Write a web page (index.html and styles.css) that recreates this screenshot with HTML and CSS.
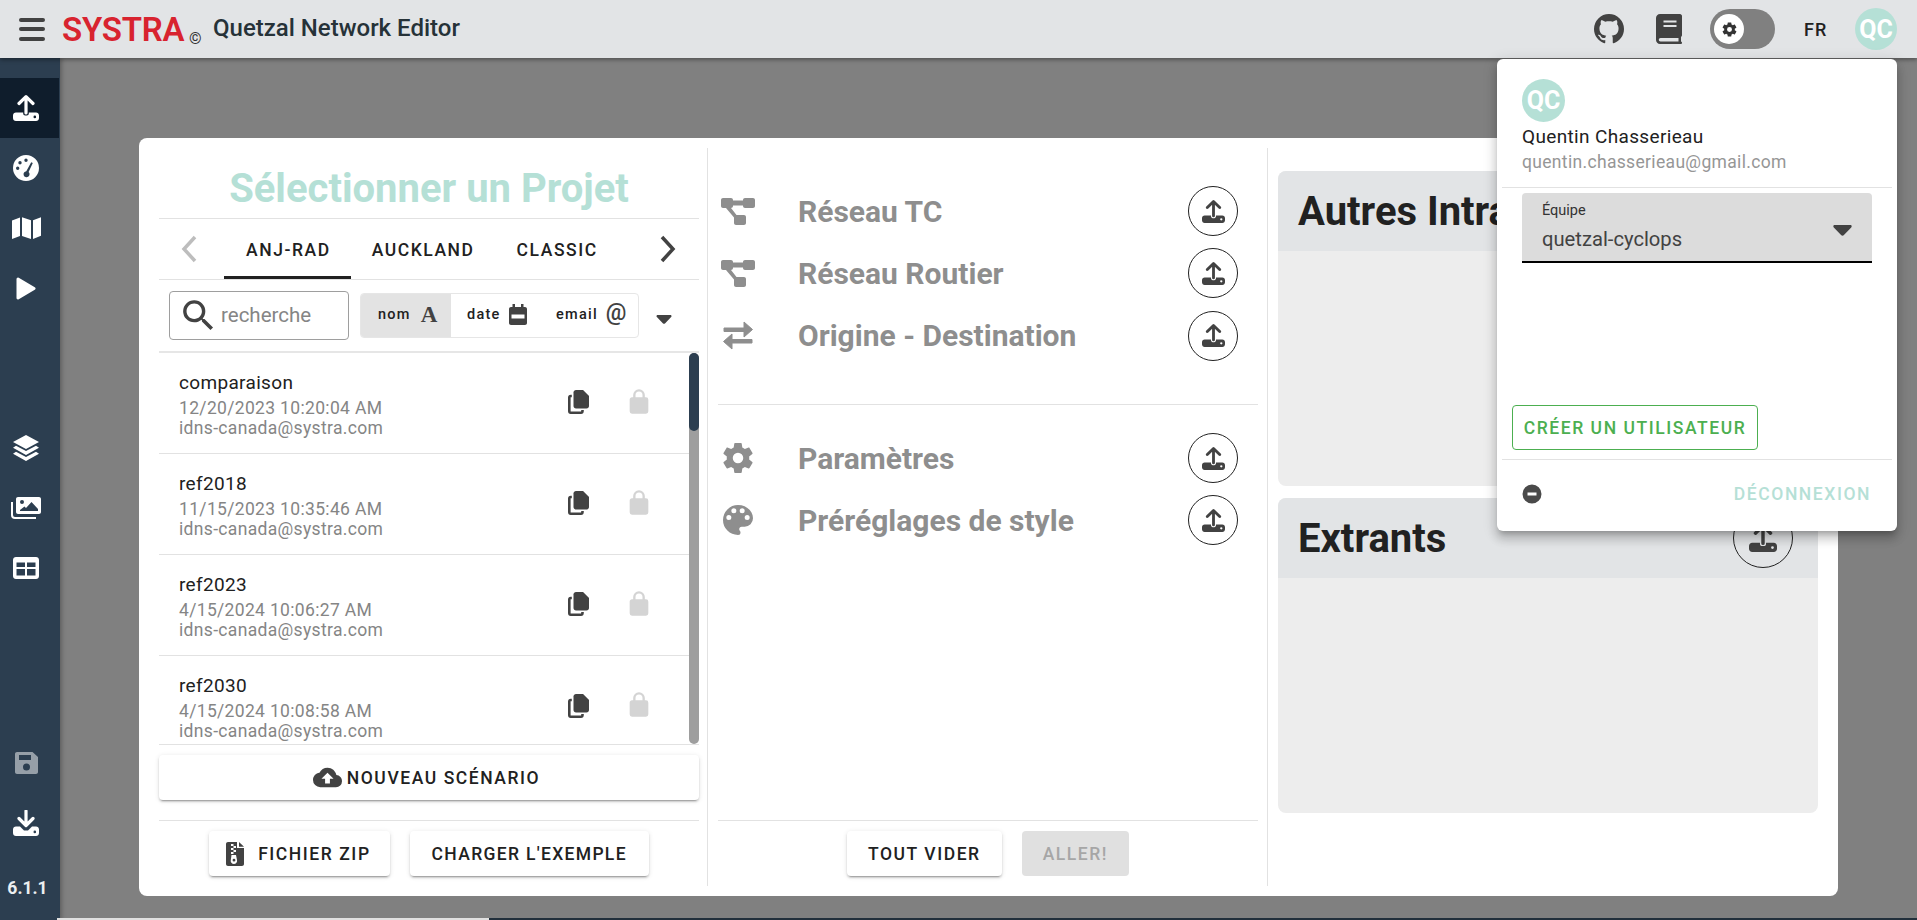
FILE: index.html
```html
<!DOCTYPE html>
<html lang="fr">
<head>
<meta charset="utf-8">
<title>Quetzal Network Editor</title>
<link rel="stylesheet" href="styles.css">
</head>
<body>
<svg class="sprite" xmlns="http://www.w3.org/2000/svg">
  <symbol id="i-upload" viewBox="0 0 26 26"><path d="M13 18V2.500M6 8.500L13 1.700L20 8.500" fill="none" stroke="currentColor" stroke-width="3.200" stroke-linecap="round" stroke-linejoin="round"/><path fill-rule="evenodd" d="M3 17.500H10.200V18.500C10.200 19.800 11 20.500 12.200 20.500H13.800C15 20.500 15.800 19.800 15.800 18.500V17.500H23C24.700 17.500 26 18.800 26 20.500V23C26 24.700 24.700 26 23 26H3C1.300 26 0 24.700 0 23V20.500C0 18.800 1.300 17.500 3 17.500ZM21.800 20.600A1.300 1.300 0 1 0 21.800 23.200A1.300 1.300 0 1 0 21.800 20.600Z" fill="currentColor"/></symbol>
  <symbol id="i-download" viewBox="0 0 26 26"><path d="M13 1V15M6 8.500L13 15.500L20 8.500" fill="none" stroke="currentColor" stroke-width="3.200" stroke-linecap="round" stroke-linejoin="round"/><path fill-rule="evenodd" d="M3 16.500H7L11 20.500H15L19 16.500H23C24.700 16.500 26 17.800 26 19.500V23C26 24.700 24.700 26 23 26H3C1.300 26 0 24.700 0 23V19.500C0 17.800 1.300 16.500 3 16.500ZM21.800 20.600A1.300 1.300 0 1 0 21.800 23.200A1.300 1.300 0 1 0 21.800 20.600Z" fill="currentColor"/></symbol>
  <symbol id="i-tach" viewBox="0 0 26 26"><path fill-rule="evenodd" fill="currentColor" d="M13 0A13 13 0 1 0 13 26A13 13 0 1 0 13 0ZM13 3.500A1.700 1.700 0 1 1 13 6.900A1.700 1.700 0 1 1 13 3.500ZM7 6A1.700 1.700 0 1 1 7 9.400A1.700 1.700 0 1 1 7 6ZM4.700 11.500A1.700 1.700 0 1 1 4.700 14.900A1.700 1.700 0 1 1 4.700 11.500ZM18.200 7.200L19.800 8L15.600 17A3 3 0 1 1 13.300 16.200Z"/></symbol>
  <symbol id="i-map" viewBox="0 0 29 22"><path fill="currentColor" d="M0 3.500L8 .5V19L0 22ZM10 .3L19 3.300V22L10 19ZM21 3.300L29 .2V18.800L21 22Z"/></symbol>
  <symbol id="i-play" viewBox="0 0 20 23"><path fill="currentColor" stroke="currentColor" stroke-width="3" stroke-linejoin="round" d="M2 2L18 11.500L2 21Z"/></symbol>
  <symbol id="i-layers" viewBox="0 0 26 26"><path fill="currentColor" d="M13 0L26 7L13 14L0 7ZM3 10.700L13 16L23 10.700L26 12.700L13 20L0 12.700ZM3 16.700L13 22L23 16.700L26 18.700L13 26L0 18.700Z"/></symbol>
  <symbol id="i-images" viewBox="0 0 30 22"><path fill="none" stroke="currentColor" stroke-width="2" d="M1 5V18C1 19.700 2.300 21 4 21H25"/><path fill="currentColor" fill-rule="evenodd" d="M7 0H28C29.100 0 30 .9 30 2V15C30 16.100 29.100 17 28 17H7C5.900 17 5 16.100 5 15V2C5 .9 5.900 0 7 0ZM11 3A2 2 0 1 0 11 7A2 2 0 1 0 11 3ZM9 14H27V12L20.500 5L15 11L13.500 9.500L9 13Z"/></symbol>
  <symbol id="i-table" viewBox="0 0 26 22"><path fill="currentColor" fill-rule="evenodd" d="M3 0H23C24.700 0 26 1.300 26 3V19C26 20.700 24.700 22 23 22H3C1.300 22 0 20.700 0 19V3C0 1.300 1.300 0 3 0ZM3.500 5.500V10H12V5.500ZM14 5.500V10H22.500V5.500ZM3.500 12V18.500H12V12ZM14 12V18.500H22.500V12Z"/></symbol>
  <symbol id="i-save" viewBox="0 0 23 22"><path fill="currentColor" fill-rule="evenodd" d="M2 0H17.500L23 5V20C23 21.100 22.100 22 21 22H2C.9 22 0 21.100 0 20V2C0 .9 .9 0 2 0ZM4 3V8H16V3ZM11.500 11.500A3.500 3.500 0 1 0 11.500 18.500A3.500 3.500 0 1 0 11.500 11.500Z"/></symbol>
  <symbol id="i-diagram" viewBox="0 0 34 27"><path fill="currentColor" d="M2 0H10C11.100 0 12 .9 12 2V2.500H22V2C22 .9 22.900 0 24 0H32C33.100 0 34 .9 34 2V8C34 9.100 33.100 10 32 10H24C22.900 10 22 9.100 22 8V7.500H12V8C12 9.100 11.100 10 10 10L15.500 17H23C24.100 17 25 17.900 25 19V25C25 26.100 24.100 27 23 27H15C13.900 27 13 26.100 13 25V19.500L5 10H2C.9 10 0 9.100 0 8V2C0 .9 .9 0 2 0Z"/></symbol>
  <symbol id="i-swap" viewBox="0 0 30 29"><path fill="currentColor" stroke="currentColor" stroke-width="1" stroke-linejoin="round" d="M1 7H21V1L29.500 8.500L21 16V10.500H1ZM29 18.500H9V13L.5 20.500L9 28V22H29Z"/></symbol>
  <symbol id="i-cog" viewBox="0 0 24 24"><path fill="currentColor" d="M12,15.500A3.500,3.500 0 0,1 8.500,12A3.500,3.500 0 0,1 12,8.500A3.500,3.500 0 0,1 15.500,12A3.500,3.500 0 0,1 12,15.500M19.430,12.970C19.470,12.650 19.500,12.330 19.500,12C19.500,11.670 19.470,11.340 19.430,11L21.540,9.370C21.730,9.220 21.780,8.950 21.660,8.730L19.660,5.270C19.540,5.050 19.270,4.960 19.050,5.050L16.560,6.050C16.040,5.660 15.500,5.320 14.870,5.070L14.500,2.420C14.460,2.180 14.250,2 14,2H10C9.750,2 9.540,2.180 9.500,2.420L9.130,5.070C8.500,5.320 7.960,5.660 7.440,6.050L4.950,5.050C4.730,4.960 4.460,5.050 4.340,5.270L2.340,8.730C2.210,8.950 2.270,9.220 2.460,9.370L4.570,11C4.530,11.340 4.500,11.670 4.500,12C4.500,12.330 4.530,12.650 4.570,12.970L2.460,14.630C2.270,14.780 2.210,15.050 2.340,15.270L4.340,18.730C4.460,18.950 4.730,19.030 4.950,18.950L7.440,17.940C7.960,18.340 8.500,18.680 9.130,18.930L9.500,21.580C9.540,21.820 9.750,22 10,22H14C14.250,22 14.460,21.820 14.500,21.580L14.870,18.930C15.500,18.670 16.040,18.340 16.560,17.940L19.050,18.950C19.270,19.030 19.540,18.950 19.660,18.730L21.660,15.270C21.780,15.050 21.730,14.780 21.540,14.630L19.430,12.970Z"/></symbol>
  <symbol id="i-palette" viewBox="0 0 24 24"><path fill="currentColor" d="M17.500,12A1.500,1.500 0 0,1 16,10.500A1.500,1.500 0 0,1 17.500,9A1.500,1.500 0 0,1 19,10.500A1.500,1.500 0 0,1 17.500,12M14.500,8A1.500,1.500 0 0,1 13,6.500A1.500,1.500 0 0,1 14.500,5A1.500,1.500 0 0,1 16,6.500A1.500,1.500 0 0,1 14.500,8M9.500,8A1.500,1.500 0 0,1 8,6.500A1.500,1.500 0 0,1 9.500,5A1.500,1.500 0 0,1 11,6.500A1.500,1.500 0 0,1 9.500,8M6.500,12A1.500,1.500 0 0,1 5,10.500A1.500,1.500 0 0,1 6.500,9A1.500,1.500 0 0,1 8,10.500A1.500,1.500 0 0,1 6.500,12M12,3A9,9 0 0,0 3,12A9,9 0 0,0 12,21A1.500,1.500 0 0,0 13.500,19.500C13.500,19.110 13.350,18.760 13.110,18.500C12.880,18.230 12.730,17.880 12.730,17.500A1.500,1.500 0 0,1 14.230,16H16A5,5 0 0,0 21,11C21,6.580 16.970,3 12,3Z"/></symbol>
  <symbol id="i-copy" viewBox="0 0 21 24"><path fill="currentColor" d="M8 0H15L21 6V16C21 17.400 19.900 18.500 18.500 18.500H8C6.600 18.500 5.500 17.400 5.500 16V2.500C5.500 1.100 6.600 0 8 0Z"/><path fill="currentColor" d="M15 .5L20.500 6H15Z"/><path fill="none" stroke="currentColor" stroke-width="2.600" d="M3.800 6H2.700C1.800 6 1.300 6.600 1.300 7.500V21C1.300 22 1.800 22.700 2.700 22.700H13C14 22.700 14.500 22 14.500 21V20"/></symbol>
  <symbol id="i-lock" viewBox="0 0 24 24"><path fill="currentColor" d="M18,8A2,2 0 0,1 20,10V20A2,2 0 0,1 18,22H6A2,2 0 0,1 4,20V10C4,8.890 4.900,8 6,8H7V6A5,5 0 0,1 12,1A5,5 0 0,1 17,6V8H18M12,3A3,3 0 0,0 9,6V8H15V6A3,3 0 0,0 12,3Z"/></symbol>
  <symbol id="i-cloud" viewBox="0 0 24 24"><path fill="currentColor" d="M14,13V17H10V13H7L12,8L17,13M19.350,10.030C18.670,6.590 15.640,4 12,4C9.110,4 6.600,5.640 5.350,8.030C2.340,8.360 0,10.900 0,14A6,6 0 0,0 6,20H19A5,5 0 0,0 24,15C24,12.360 21.950,10.220 19.350,10.030Z"/></symbol>
  <symbol id="i-zip" viewBox="0 0 18 24"><path fill="currentColor" fill-rule="evenodd" d="M2 0H11V6H18V22C18 23.100 17.100 24 16 24H2C.9 24 0 23.100 0 22V2C0 .9 .9 0 2 0ZM5 2V4H7.500V2ZM7.500 4V6H10V4ZM5 6V8H7.500V6ZM7.500 8V10H10V8ZM5 10V12H7.500V10ZM5.500 13L4.800 18A3.200 3.200 0 1 0 11 18L10 13ZM8 16.800A1.400 1.400 0 1 1 8 19.600A1.400 1.400 0 1 1 8 16.800ZM13 0L18 4.700H13Z"/></symbol>
  <symbol id="i-search" viewBox="0 0 24 24"><path fill="currentColor" d="M9.500,3A6.500,6.500 0 0,1 16,9.500C16,11.110 15.410,12.590 14.440,13.730L14.710,14H15.500L20.500,19L19,20.500L14,15.500V14.710L13.730,14.440C12.590,15.410 11.110,16 9.500,16A6.500,6.500 0 0,1 3,9.500A6.500,6.500 0 0,1 9.500,3M9.500,5C7,5 5,7 5,9.500C5,12 7,14 9.500,14C12,14 14,12 14,9.500C14,7 12,5 9.500,5Z"/></symbol>
  <symbol id="i-cal" viewBox="0 0 18 21"><path fill="currentColor" fill-rule="evenodd" d="M3.500 0H6V3H12V0H14.500V3H16C17.100 3 18 3.900 18 5V19C18 20.100 17.100 21 16 21H2C.9 21 0 20.100 0 19V5C0 3.900 .9 3 2 3H3.500ZM2.500 10.500V14.500H15.500V10.500Z"/></symbol>
  <symbol id="i-caret" viewBox="0 0 20 12"><path fill="currentColor" d="M0 1.500C0 .5 .7 0 1.500 0H18.500C19.500 0 20 .5 20 1.500C20 2 19.800 2.400 19.500 2.700L11.300 11.300C10.600 12 9.400 12 8.700 11.300L.5 2.700C.2 2.400 0 2 0 1.500Z"/></symbol>
  <symbol id="i-github" viewBox="0 0 24 24"><path fill="currentColor" d="M12,2A10,10 0 0,0 2,12C2,16.420 4.870,20.170 8.840,21.500C9.340,21.580 9.500,21.270 9.500,21C9.500,20.770 9.500,20.140 9.500,19.310C6.730,19.910 6.140,17.970 6.140,17.970C5.680,16.810 5.030,16.500 5.030,16.500C4.120,15.880 5.100,15.900 5.100,15.900C6.100,15.970 6.630,16.930 6.630,16.930C7.500,18.450 8.970,18 9.540,17.760C9.630,17.110 9.890,16.670 10.170,16.420C7.950,16.170 5.620,15.310 5.620,11.500C5.620,10.390 6,9.500 6.650,8.790C6.550,8.540 6.200,7.500 6.750,6.150C6.750,6.150 7.590,5.880 9.500,7.170C10.290,6.950 11.150,6.840 12,6.840C12.850,6.840 13.710,6.950 14.500,7.170C16.410,5.880 17.250,6.150 17.250,6.150C17.800,7.500 17.450,8.540 17.350,8.790C18,9.500 18.380,10.390 18.380,11.500C18.380,15.320 16.040,16.160 13.810,16.410C14.170,16.720 14.500,17.330 14.500,18.260C14.500,19.600 14.500,20.680 14.500,21C14.500,21.270 14.660,21.590 15.170,21.500C19.140,20.160 22,16.420 22,12A10,10 0 0,0 12,2Z"/></symbol>
  <symbol id="i-book" viewBox="0 0 26 30"><path fill="currentColor" fill-rule="evenodd" d="M4 0H24C25 0 26 1 26 2V21C26 22 25.500 22.500 25 23V27.500C25.700 27.700 26 28 26 28.700C26 29.500 25.500 30 24.800 30H4C1.800 30 0 28.200 0 26V4C0 1.800 1.800 0 4 0ZM7.500 6.500V8.500H20.500V6.500ZM7.500 11V13H20.500V11ZM4.500 24A1.500 1.500 0 0 0 4.500 27.500H22.500V24Z"/></symbol>
  <symbol id="i-minus" viewBox="0 0 20 20"><path fill="currentColor" fill-rule="evenodd" d="M10 .5A9.500 9.500 0 1 0 10 19.500A9.500 9.500 0 1 0 10 .5ZM5.500 8.500H14.500V11.500H5.500Z"/></symbol>
</svg>

<div class="app">
  <header class="topbar">
    <div class="burger"><span></span><span></span><span></span></div>
    <span class="logo">SYSTRA</span>
    <span class="copyright">©</span>
    <span class="appname">Quetzal Network Editor</span>
    <div class="topbar-right">
      <svg class="ic-github"><use href="#i-github"/></svg>
      <svg class="ic-book"><use href="#i-book"/></svg>
      <div class="toggle"><span class="knob"><svg class="ic-knob"><use href="#i-cog"/></svg></span></div>
      <span class="lang">FR</span>
      <span class="avatar avatar-top">QC</span>
    </div>
  </header>

  <div class="main">
    <nav class="sidebar">
      <a class="nav active"><svg class="ic-26"><use href="#i-upload"/></svg></a>
      <a class="nav"><svg class="ic-26"><use href="#i-tach"/></svg></a>
      <a class="nav"><svg class="ic-map"><use href="#i-map"/></svg></a>
      <a class="nav"><svg class="ic-play"><use href="#i-play"/></svg></a>
      <div class="nav-gap"></div>
      <a class="nav"><svg class="ic-26"><use href="#i-layers"/></svg></a>
      <a class="nav"><svg class="ic-images"><use href="#i-images"/></svg></a>
      <a class="nav"><svg class="ic-table"><use href="#i-table"/></svg></a>
      <div class="nav-spacer"></div>
      <a class="nav disabled"><svg class="ic-save"><use href="#i-save"/></svg></a>
      <a class="nav"><svg class="ic-26"><use href="#i-download"/></svg></a>
      <div class="version">6.1.1</div>
    </nav>

    <main class="stage">
      <section class="dialog">
        <div class="col col-left">
          <h1 class="title">Sélectionner un Projet</h1>
          <div class="tabs">
            <svg class="chev chev-off" viewBox="0 0 16 28"><path d="M14 2L3 14L14 26"/></svg>
            <div class="tab tab-on">ANJ-RAD</div>
            <div class="tab">AUCKLAND</div>
            <div class="tab">CLASSIC</div>
            <svg class="chev chev-on" viewBox="0 0 16 28"><path d="M2 2L13 14L2 26"/></svg>
          </div>
          <div class="filters">
            <div class="search"><svg class="ic-search"><use href="#i-search"/></svg><span>recherche</span></div>
            <div class="sorter">
              <div class="sort sort-on"><span>nom</span><span class="glyph-a">A</span></div>
              <div class="sort sort-date"><span>date</span><svg class="ic-cal"><use href="#i-cal"/></svg></div>
              <div class="sort sort-mail"><span>email</span><span class="glyph-at">@</span></div>
            </div>
            <svg class="ic-caret"><use href="#i-caret"/></svg>
          </div>
          <div class="list">
            <div class="rows">
              <div class="row">
                <div class="row-text"><div class="row-name">comparaison</div><div class="row-sub">12/20/2023 10:20:04 AM</div><div class="row-sub">idns-canada@systra.com</div></div>
                <svg class="ic-copy"><use href="#i-copy"/></svg><svg class="ic-lock"><use href="#i-lock"/></svg>
              </div>
              <div class="row">
                <div class="row-text"><div class="row-name">ref2018</div><div class="row-sub">11/15/2023 10:35:46 AM</div><div class="row-sub">idns-canada@systra.com</div></div>
                <svg class="ic-copy"><use href="#i-copy"/></svg><svg class="ic-lock"><use href="#i-lock"/></svg>
              </div>
              <div class="row">
                <div class="row-text"><div class="row-name">ref2023</div><div class="row-sub">4/15/2024 10:06:27 AM</div><div class="row-sub">idns-canada@systra.com</div></div>
                <svg class="ic-copy"><use href="#i-copy"/></svg><svg class="ic-lock"><use href="#i-lock"/></svg>
              </div>
              <div class="row">
                <div class="row-text"><div class="row-name">ref2030</div><div class="row-sub">4/15/2024 10:08:58 AM</div><div class="row-sub">idns-canada@systra.com</div></div>
                <svg class="ic-copy"><use href="#i-copy"/></svg><svg class="ic-lock"><use href="#i-lock"/></svg>
              </div>
            </div>
            <div class="scrollbar"><div class="thumb"></div></div>
          </div>
          <button class="btn btn-wide"><svg class="ic-cloud"><use href="#i-cloud"/></svg>NOUVEAU SCÉNARIO</button>
          <div class="foot">
            <button class="btn btn-zip"><svg class="ic-zip"><use href="#i-zip"/></svg>FICHIER ZIP</button>
            <button class="btn btn-tight">CHARGER L'EXEMPLE</button>
          </div>
        </div>

        <div class="col col-mid">
          <div class="group group-a">
            <div class="inp"><span class="inp-ic"><svg class="ic-diagram"><use href="#i-diagram"/></svg></span><span class="inp-label">Réseau TC</span><span class="up"><svg class="ic-up"><use href="#i-upload"/></svg></span></div>
            <div class="inp"><span class="inp-ic"><svg class="ic-diagram"><use href="#i-diagram"/></svg></span><span class="inp-label">Réseau Routier</span><span class="up"><svg class="ic-up"><use href="#i-upload"/></svg></span></div>
            <div class="inp"><span class="inp-ic"><svg class="ic-swap"><use href="#i-swap"/></svg></span><span class="inp-label">Origine - Destination</span><span class="up"><svg class="ic-up"><use href="#i-upload"/></svg></span></div>
          </div>
          <div class="group group-b">
            <div class="inp"><span class="inp-ic"><svg class="ic-cog"><use href="#i-cog"/></svg></span><span class="inp-label">Paramètres</span><span class="up"><svg class="ic-up"><use href="#i-upload"/></svg></span></div>
            <div class="inp"><span class="inp-ic"><svg class="ic-palette"><use href="#i-palette"/></svg></span><span class="inp-label">Préréglages de style</span><span class="up"><svg class="ic-up"><use href="#i-upload"/></svg></span></div>
          </div>
          <div class="foot">
            <button class="btn">TOUT VIDER</button>
            <button class="btn btn-off">ALLER!</button>
          </div>
        </div>

        <div class="col col-right">
          <div class="panel">
            <div class="panel-head"><h2>Autres Intrants</h2><span class="up up-big"><svg class="ic-up-big"><use href="#i-upload"/></svg></span></div>
          </div>
          <div class="panel">
            <div class="panel-head"><h2>Extrants</h2><span class="up up-big"><svg class="ic-up-big"><use href="#i-upload"/></svg></span></div>
          </div>
        </div>
      </section>
    </main>
  </div>

  <div class="edge"><span class="edge-a"></span><span class="edge-b"></span></div>

  <aside class="menu">
    <div class="menu-user">
      <span class="avatar avatar-menu">QC</span>
      <div class="menu-name">Quentin Chasserieau</div>
      <div class="menu-mail">quentin.chasserieau@gmail.com</div>
    </div>
    <div class="menu-body">
      <div class="select">
        <div class="select-text"><div class="select-label">Équipe</div><div class="select-value">quetzal-cyclops</div></div>
        <svg class="ic-caret-sel"><use href="#i-caret"/></svg>
      </div>
      <button class="btn-outline">CRÉER UN UTILISATEUR</button>
    </div>
    <div class="menu-foot">
      <svg class="ic-minus"><use href="#i-minus"/></svg>
      <span class="logout">DÉCONNEXION</span>
    </div>
  </aside>
</div>
</body>
</html>
```

FILE: styles.css
```css
* { box-sizing: border-box; }
html, body { margin: 0; height: 100%; overflow: hidden; }
body { font-family: Roboto, "Noto Sans", sans-serif; color: #212121; background: #808080; }
.sprite { display: none; }
svg { display: block; flex: none; }
h1, h2 { margin: 0; }
button { font-family: inherit; border: 0; cursor: pointer; }

.app { position: relative; width: 1917px; height: 920px; display: flex; flex-direction: column; }

/* top bar */
.topbar { position: relative; z-index: 3; height: 58px; flex: none; background: #e2e4e6; display: flex; align-items: center; box-shadow: 0 2px 4px rgba(0,0,0,.35); padding-left: 19px; }
.burger { width: 26px; height: 23px; display: flex; flex-direction: column; justify-content: space-between; }
.burger span { height: 4px; border-radius: 2px; background: #424242; }
.logo { margin-left: 17px; font-size: 33px; font-weight: 600; letter-spacing: -.2px; color: #d8232f; line-height: 1; width: 120px; }
.copyright { margin: 18px 0 0 7px; font-size: 16px; color: #333; width: 24px; }
.appname { font-size: 24px; font-weight: 500; color: #263238; margin-top: -2px; }
.topbar-right { margin-left: auto; display: flex; align-items: center; padding-right: 20px; }
.ic-github { width: 36px; height: 36px; color: #424242; margin-right: 29px; }
.ic-book { width: 26px; height: 30px; color: #424242; margin-right: 28px; }
.toggle { width: 65px; height: 40px; border-radius: 20px; background: #808080; padding: 5px 0 0 4px; margin-right: 29px; }
.knob { width: 30px; height: 30px; border-radius: 50%; background: #fff; display: flex; align-items: center; justify-content: center; }
.ic-knob { width: 17px; height: 17px; color: #333; }
.lang { font-size: 18px; font-weight: 500; letter-spacing: 1px; width: 37px; color: #212121; margin-right: 14px; }
.avatar { border-radius: 50%; background: #b5e0d6; color: #fff; font-weight: 700; display: flex; align-items: center; justify-content: center; }
.avatar-top { width: 42px; height: 42px; font-size: 25px; }

/* layout */
.main { flex: 1; display: flex; min-height: 0; }
.sidebar { position: relative; z-index: 2; width: 60px; flex: none; background: #2c3e50; box-shadow: 2px 0 4px rgba(0,0,0,.25); display: flex; flex-direction: column; padding-top: 20px; color: #fff; }
.nav { height: 60px; display: flex; align-items: center; justify-content: center; padding-right: 8px; flex: none; }
.nav.active { background: #0f1d2c; width: 59px; padding-right: 7px; }
.nav.disabled { opacity: .5; }
.nav-gap { height: 100px; flex: none; }
.nav-spacer { flex: 1; }
.version { font-size: 17.5px; font-weight: 700; text-align: center; height: 67px; padding: 25px 5px 0 0; color: #eceff1; flex: none; }
.ic-26 { width: 26px; height: 26px; }
.ic-map { width: 29px; height: 22px; }
.ic-play { width: 20px; height: 23px; }
.ic-images { width: 30px; height: 22px; }
.ic-table { width: 26px; height: 22px; }
.ic-save { width: 23px; height: 22px; }

.stage { flex: 1; background: #808080; padding: 80px 0 0 79px; }
.dialog { width: 1699px; height: 758px; background: #fff; border-radius: 8px; padding: 10px 0; display: flex; }
.col { height: 738px; display: flex; flex-direction: column; flex: none; }
.col-left { width: 569px; padding: 0 8px 0 20px; border-right: 1px solid #e2e2e2; }
.col-mid { width: 560px; padding: 0 9px 0 10px; border-right: 1px solid #e2e2e2; }
.col-right { flex: 1; padding: 23px 20px 0 10px; gap: 12px; }

/* left */
.title { height: 71px; flex: none; border-bottom: 1px solid #e2e2e2; font-size: 40px; font-weight: 700; color: #b5e0d6; text-align: center; line-height: 82px; white-space: nowrap; }
.tabs { height: 61px; flex: none; border-bottom: 1px solid #e2e2e2; display: flex; align-items: center; font-size: 17.5px; font-weight: 500; letter-spacing: 1.56px; position: relative; }
.chev { width: 16px; height: 28px; }
.chev path { fill: none; stroke-width: 3.5; }
.chev-off { margin: 0 27px 0 22px; }
.chev-off path { stroke: #bdbdbd; }
.chev-on { margin-left: 41px; }
.chev-on path { stroke: #424242; }
.tab { height: 60px; display: flex; align-items: center; padding: 1px 21px 0; color: #212121; }
.tab-on { border-bottom: 3px solid #212121; padding: 4px 20px 0 22px; }
.filters { height: 71px; flex: none; display: flex; align-items: center; padding-left: 10px; }
.search { width: 180px; height: 49px; border: 1px solid #9e9e9e; border-radius: 4px; display: flex; align-items: center; font-size: 20.5px; color: #858585; padding-left: 8px; }
.search span { margin-top: -2px; }
.ic-search { width: 41px; height: 41px; color: #424242; margin-right: 2px; }
.sorter { margin-left: 11px; width: 279px; height: 45px; border: 1px solid #e6e6e6; border-radius: 4px; display: flex; overflow: hidden; font-size: 14.5px; font-weight: 500; letter-spacing: 1.25px; }
.sort { display: flex; align-items: center; color: #212121; padding-bottom: 2px; }
.sort-on { width: 90px; background: #e3e3e3; padding-left: 17px; }
.sort-date { width: 88px; padding-left: 16px; }
.sort-mail { flex: 1; padding-left: 17px; }
.glyph-a { font-family: "Liberation Serif", serif; font-size: 23px; font-weight: 700; margin-left: 10px; color: #424242; letter-spacing: 0; }
.glyph-at { font-size: 23px; font-weight: 500; margin-left: 8px; color: #424242; letter-spacing: 0; margin-top: -4px; }
.ic-cal { width: 18px; height: 21px; color: #424242; margin-left: 8px; }
.ic-caret { width: 16px; height: 9px; color: #424242; margin-left: 17px; margin-top: 7px; }
.list { height: 394px; flex: none; border-top: 2px solid #e6e6e6; border-bottom: 1px solid #e2e2e2; display: flex; overflow: hidden; position: relative; }
.rows { flex: 1; min-width: 0; }
.row { height: 101px; border-bottom: 1px solid #e2e2e2; display: flex; align-items: center; padding: 0 0 0 20px; }
.row:last-child { border-bottom: 0; }
.row-text { flex: 1; padding-top: 2px; }
.row-name { font-size: 19px; line-height: 24px; letter-spacing: .33px; color: #212121; margin-bottom: 3px; }
.row-sub { font-size: 17.5px; line-height: 20px; color: #858585; letter-spacing: .33px; }
.ic-copy { width: 21px; height: 24px; color: #424242; margin-right: 36px; margin-top: -2px; }
.ic-lock { width: 28px; height: 28px; color: #d4d4d4; margin-right: 36px; margin-top: -3px; }
.scrollbar { width: 10px; background: #9e9e9e; border-radius: 5px; flex: none; }
.thumb { height: 78px; background: #2c3e50; border-radius: 5px; }

.btn { height: 45px; background: #fff; border-radius: 4px; padding: 0 21px; display: inline-flex; align-items: center; justify-content: center; font-size: 17.5px; font-weight: 500; letter-spacing: 1.56px; color: #212121; box-shadow: 0 3px 1px -2px rgba(0,0,0,.2), 0 2px 2px 0 rgba(0,0,0,.14), 0 1px 5px 0 rgba(0,0,0,.12); white-space: nowrap; }
.btn-wide { flex: none; margin-top: 10px; width: 100%; padding-right: 26px; }
.btn-tight { letter-spacing: 1.32px; padding: 0 22px; }
.btn-zip { padding-right: 19px; }
.ic-cloud { width: 29px; height: 29px; color: #424242; margin-right: 5px; }
.ic-zip { width: 18px; height: 24px; color: #424242; margin: 0 14px 0 -4px; }
.btn-off { background: #e0e0e0; color: #a6a6a6; box-shadow: none; }
.foot { margin-top: auto; height: 66px; flex: none; border-top: 1px solid #e2e2e2; padding-top: 10px; display: flex; justify-content: center; gap: 20px; }

/* middle */
.group-a { padding-top: 32px; height: 257px; border-bottom: 1px solid #e2e2e2; flex: none; }
.group-b { padding-top: 22px; flex: none; }
.inp { height: 62.3px; display: flex; align-items: center; }
.inp-ic { width: 40px; display: flex; justify-content: center; color: #8e8e8e; flex: none; }
.inp-label { margin-left: 40px; flex: 1; font-size: 30px; font-weight: 700; color: #8e8e8e; white-space: nowrap; }
.up { width: 50px; height: 50px; border: 1px solid #212121; border-radius: 50%; display: flex; align-items: center; justify-content: center; color: #424242; margin-right: 20px; flex: none; background: #fff; }
.ic-diagram { width: 34px; height: 27px; }
.ic-swap { width: 30px; height: 29px; }
.ic-palette { width: 40px; height: 40px; }
.ic-cog { width: 36px; height: 36px; }
.ic-up { width: 23px; height: 23px; }

/* right */
.panel { height: 315px; flex: none; background: #ededed; border-radius: 8px; overflow: hidden; }
.panel-head { height: 80px; background: #e2e4e6; display: flex; align-items: center; justify-content: space-between; padding: 0 25px 0 20px; }
.panel-head h2 { font-size: 40px; font-weight: 700; color: #212121; white-space: nowrap; }
.up-big { width: 60px; height: 60px; margin: 0; background: transparent; }
.ic-up-big { width: 28px; height: 28px; }

/* bottom edge */
.edge { position: absolute; left: 57px; right: 0; bottom: 0; height: 2px; display: flex; z-index: 2; }
.edge-a { width: 432px; background: #e0e0e0; }
.edge-b { flex: 1; background: #22303c; }

/* account menu */
.menu { position: absolute; z-index: 4; left: 1497px; top: 59px; width: 400px; height: 472px; background: #fff; border-radius: 6px; box-shadow: 0 5px 5px -3px rgba(0,0,0,.2), 0 8px 10px 1px rgba(0,0,0,.14), 0 3px 14px 2px rgba(0,0,0,.12); padding: 0 5px; display: flex; flex-direction: column; }
.menu-user { height: 129px; flex: none; border-bottom: 1px solid #e2e2e2; padding: 20px 0 0 20px; }
.avatar-menu { width: 43px; height: 43px; font-size: 25px; }
.menu-name { font-size: 19px; line-height: 24px; letter-spacing: .35px; margin-top: 3px; color: #212121; }
.menu-mail { font-size: 17.5px; line-height: 24px; color: #969696; letter-spacing: .33px; margin-top: 1px; }
.menu-body { height: 144px; flex: 1; border-bottom: 1px solid #e2e2e2; padding: 5px 0 9px 10px; display: flex; flex-direction: column; }
.select { margin-left: 10px; width: 350px; height: 70px; background: #dcdcdc; border-radius: 4px 4px 0 0; border-bottom: 2px solid #000; display: flex; align-items: center; padding: 0 20px 0 20px; }
.select-text { flex: 1; }
.select-label { font-size: 14.5px; line-height: 18px; color: #333; margin-top: 1px; }
.select-value { font-size: 20.2px; line-height: 28px; color: #424242; margin-top: 5px; }
.ic-caret-sel { width: 19px; height: 11px; margin-top: 6px; color: #424242; }
.btn-outline { margin-top: auto; width: 246px; height: 45px; background: #fff; border: 1px solid #4caf50; border-radius: 4px; color: #4caf50; font-size: 17.5px; font-weight: 500; letter-spacing: 1.56px; padding: 0; white-space: nowrap; }
.menu-foot { height: 71px; flex: none; display: flex; align-items: center; justify-content: space-between; padding: 0 21px 4px 20px; }
.ic-minus { width: 20px; height: 20px; color: #4a4a4a; }
.logout { font-size: 17.5px; font-weight: 500; letter-spacing: 1.56px; color: #b5e0d6; }
```
